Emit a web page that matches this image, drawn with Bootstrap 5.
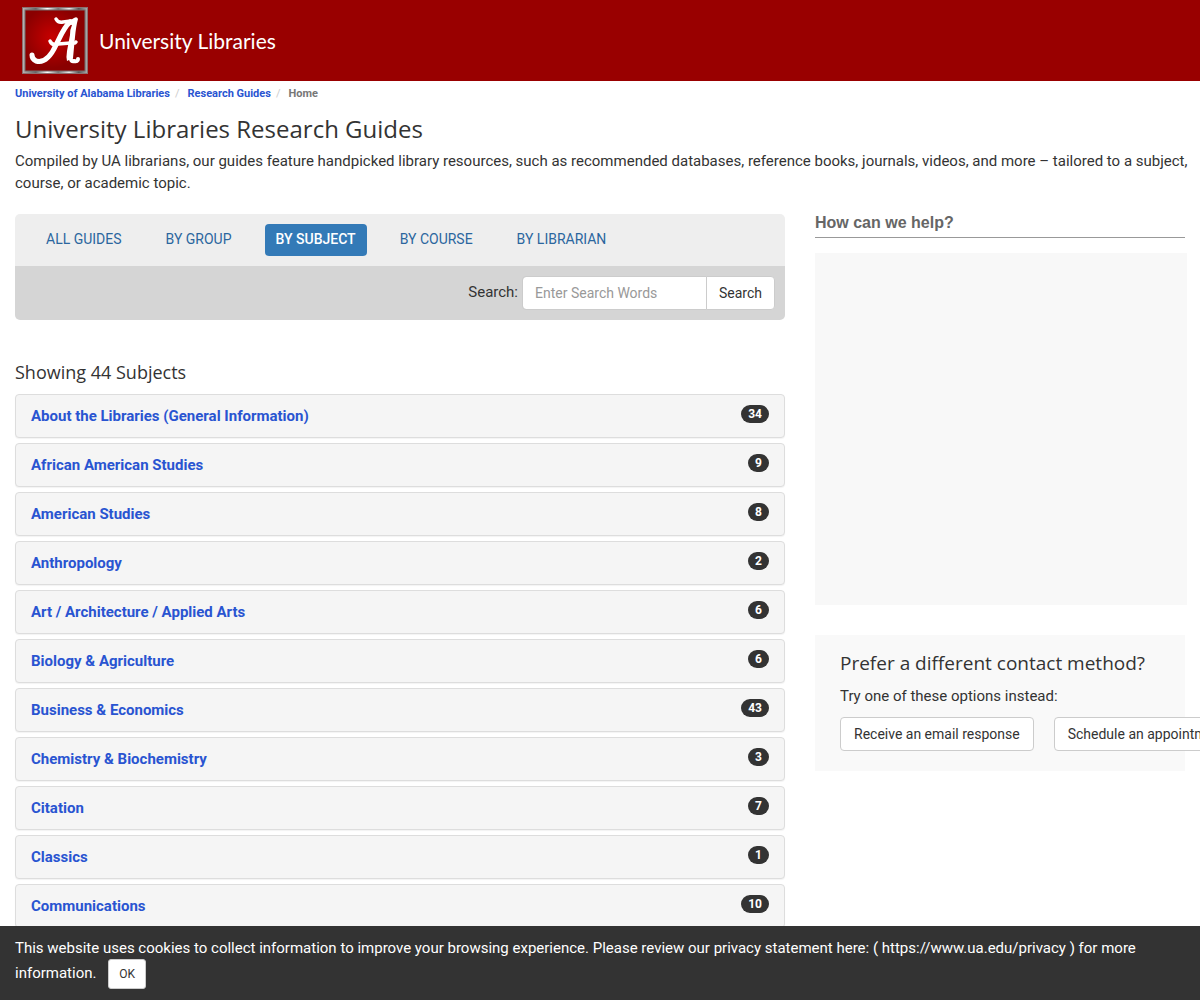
<!DOCTYPE html>
<html lang="en">
<head>
<meta charset="utf-8">
<meta name="viewport" content="width=device-width, initial-scale=1">
<title>University Libraries Research Guides</title>
<link href="https://cdn.jsdelivr.net/npm/bootstrap@5.3.0/dist/css/bootstrap.min.css" rel="stylesheet">
<style>
  body { font-family: Roboto, sans-serif; font-size: 15px; line-height: 22px; color: #333; overflow-x: hidden; }
  a { color: #2954d1; text-decoration: none; }
  .site-header { background: #900; padding: 7px 21px; }
  .brand { gap: 10px; }
  .site-header svg { width: 68px; height: 67px; }
  .site-name { font-family: Lato, sans-serif; font-size: 21px; line-height: 28px; color: #fff; }
  .page-body { padding: 0 15px; }
  .breadcrumb { --bs-breadcrumb-item-padding-x: 5px; font-size: 11px; line-height: 16px; font-weight: 700; margin: 5px 0 11px; }
  .breadcrumb-item + .breadcrumb-item::before { color: #ccc; font-weight: 400; padding-right: 8px; }
  .breadcrumb-item.active { color: #777; }
  h1, h2, .contact-title { font-family: "Open Sans", sans-serif; font-weight: 400; }
  h1 { font-size: 24px; line-height: 32px; margin: 0 0 5px; }
  h2 { font-size: 18px; line-height: 24px; margin: 40px 0 10px; }
  .intro { margin: 0 -8px 20px 0; }
  .main-row { --bs-gutter-x: 30px; }
  .guide-tabs { background: #eee; border-radius: 5px 5px 0 0; padding: 10px 20px; gap: 22px; }
  .guide-tabs .nav-link { font-size: 14px; line-height: 20px; padding: 5px 11px 7px; color: #2b669e; border-radius: 4px; }
  .guide-tabs .nav-link.active { background: #337ab7; font-weight: 500; color: #fff; }
  .search-bar { background: #d5d5d5; border-radius: 0 0 5px 5px; padding: 10px; gap: 4px; }
  .search-bar label { padding-top: 5px; }
  .search-bar .input-group { width: 253px; }
  .search-bar .form-control { font-size: 14px; line-height: 20px; height: 34px; padding: 6px 12px; border-color: #ccc; border-radius: 4px; }
  .search-bar .form-control::placeholder { color: #999; }
  .plain-btn { font-size: 14px; line-height: 20px; height: 34px; padding: 5px 12px; border: 1px solid #ccc; border-radius: 4px; background: #fff; color: #333; white-space: nowrap; }
  .plain-btn:hover { background: #e6e6e6; }
  .subject-list { gap: 5px; }
  .subject { background: #f5f5f5; border: 1px solid #ddd; border-radius: 4px; box-shadow: 0 1px 1px rgba(0,0,0,.05); padding: 10px 15px; font-weight: 700; }
  .subject .badge { background: #333; font-size: 12px; line-height: 12px; padding: 3px 7px; margin-bottom: 4px; }
  .help-title { font-family: "Liberation Sans", Arial, sans-serif; font-size: 16px; line-height: 18px; font-weight: 700; color: #666; border-bottom: 1px solid #999; padding-bottom: 5px; margin-bottom: 15px; }
  .chat-frame { background: #f8f8f8; height: 352px; margin: 0 -2px 30px 0; }
  .contact-box { background: #f9f9f9; padding: 15px 25px 20px; }
  .contact-title { font-size: 19px; line-height: 26px; margin-bottom: 9px; }
  .contact-box p { margin-bottom: 10px; }
  .contact-options { gap: 20px; }
  .contact-options .plain-btn { padding: 5px 13px; }
  .cookie-bar { background: #333; color: #fff; padding: 11px 15px; line-height: 22px; }
  .cookie-bar .plain-btn { font-size: 12px; line-height: 18px; height: 30px; padding: 5px 10px; border-radius: 3px; margin-left: 8px; }
</style>
<script src="https://cdn.jsdelivr.net/npm/bootstrap@5.3.0/dist/js/bootstrap.bundle.min.js"></script>
</head>
<body>
<header class="site-header">
  <a href="#" class="brand d-flex align-items-center">
    <svg viewBox="0 0 68 67" aria-hidden="true">
      <defs>
        <radialGradient id="crimson" cx=".45" cy=".45"><stop offset="0" stop-color="#c80000"/><stop offset="1" stop-color="#8a0000"/></radialGradient>
        <linearGradient id="silver" x2="1" y2="0"><stop offset="0" stop-color="#b9b3b3"/><stop offset=".2" stop-color="#666"/><stop offset=".38" stop-color="#fff"/><stop offset=".55" stop-color="#777"/><stop offset=".72" stop-color="#eee"/><stop offset=".87" stop-color="#555"/><stop offset="1" stop-color="#aaa"/></linearGradient>
      </defs>
      <path fill="#8c7070" d="M1 0h66v67H1z"/>
      <rect x="2" y="1" width="64" height="65" fill="url(#silver)"/>
      <rect x="4" y="3" width="60" height="61" fill="url(#crimson)" stroke="#756c6c" stroke-width="1"/>
      <g fill="none" stroke="#fff" stroke-linecap="round" stroke-linejoin="round">
        <path stroke-width="3.5" d="M35 12Q37 16 42 15L50 14"/>
        <path stroke-width="5" d="M49 15C43 20 39 30 35 38C29 51 22 56 15 54Q11 52 11 48"/>
        <path stroke-width="3.5" d="M29 34Q31 39 37 37L50 36Q54 37 55 35"/>
        <path stroke-width="4" d="M50 49Q49 55 53 54Q57 55 57 52"/>
      </g>
      <path fill="#fff" d="M48 14L53 11Q56 9 57 12Q55 19 54 30L52 51L46 54Q45 50 46 44L49 28Q49 22 51 18L45 17Z"/>
    </svg>
    <span class="site-name">University Libraries</span>
  </a>
</header>

<main class="page-body">
  <nav aria-label="breadcrumb">
    <ol class="breadcrumb">
      <li class="breadcrumb-item"><a href="#">University of Alabama Libraries</a></li>
      <li class="breadcrumb-item"><a href="#">Research Guides</a></li>
      <li class="breadcrumb-item active" aria-current="page">Home</li>
    </ol>
  </nav>
  <h1>University Libraries Research Guides</h1>
  <p class="intro">Compiled by UA librarians, our guides feature handpicked library resources, such as recommended databases, reference books, journals, videos, and more – tailored to a subject, course, or academic topic.</p>

  <div class="row main-row">
    <div class="col-8">
      <nav class="nav nav-pills guide-tabs">
        <a class="nav-link" href="#">ALL GUIDES</a>
        <a class="nav-link" href="#">BY GROUP</a>
        <a class="nav-link active" aria-current="page" href="#">BY SUBJECT</a>
        <a class="nav-link" href="#">BY COURSE</a>
        <a class="nav-link" href="#">BY LIBRARIAN</a>
      </nav>
      <form class="search-bar d-flex justify-content-end">
        <label for="guide-search">Search:</label>
        <div class="input-group">
          <input id="guide-search" type="text" class="form-control" placeholder="Enter Search Words">
          <button type="button" class="btn plain-btn">Search</button>
        </div>
      </form>

      <h2>Showing 44 Subjects</h2>
      <div class="subject-list d-flex flex-column">
        <div class="subject d-flex justify-content-between align-items-center"><a href="#">About the Libraries (General Information)</a><span class="badge rounded-pill">34</span></div>
        <div class="subject d-flex justify-content-between align-items-center"><a href="#">African American Studies</a><span class="badge rounded-pill">9</span></div>
        <div class="subject d-flex justify-content-between align-items-center"><a href="#">American Studies</a><span class="badge rounded-pill">8</span></div>
        <div class="subject d-flex justify-content-between align-items-center"><a href="#">Anthropology</a><span class="badge rounded-pill">2</span></div>
        <div class="subject d-flex justify-content-between align-items-center"><a href="#">Art / Architecture / Applied Arts</a><span class="badge rounded-pill">6</span></div>
        <div class="subject d-flex justify-content-between align-items-center"><a href="#">Biology &amp; Agriculture</a><span class="badge rounded-pill">6</span></div>
        <div class="subject d-flex justify-content-between align-items-center"><a href="#">Business &amp; Economics</a><span class="badge rounded-pill">43</span></div>
        <div class="subject d-flex justify-content-between align-items-center"><a href="#">Chemistry &amp; Biochemistry</a><span class="badge rounded-pill">3</span></div>
        <div class="subject d-flex justify-content-between align-items-center"><a href="#">Citation</a><span class="badge rounded-pill">7</span></div>
        <div class="subject d-flex justify-content-between align-items-center"><a href="#">Classics</a><span class="badge rounded-pill">1</span></div>
        <div class="subject d-flex justify-content-between align-items-center"><a href="#">Communications</a><span class="badge rounded-pill">10</span></div>
      </div>
    </div>

    <aside class="col-4">
      <div class="help-title" role="heading" aria-level="2">How can we help?</div>
      <div class="chat-frame"></div>
      <section class="contact-box">
        <h3 class="contact-title">Prefer a different contact method?</h3>
        <p>Try one of these options instead:</p>
        <div class="contact-options d-flex">
          <button type="button" class="btn plain-btn flex-shrink-0">Receive an email response</button>
          <button type="button" class="btn plain-btn flex-shrink-0">Schedule an appointment</button>
        </div>
      </section>
    </aside>
  </div>
</main>

<div class="cookie-bar fixed-bottom">
  This website uses cookies to collect information to improve your browsing experience. Please review our privacy statement here: ( https://www.ua.edu/privacy ) for more information.
  <button type="button" class="btn plain-btn">OK</button>
</div>
</body>
</html>
